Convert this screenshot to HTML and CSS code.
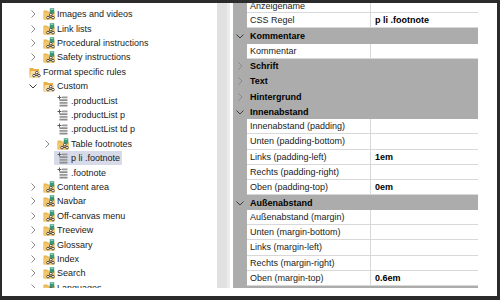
FILE: index.html
```html
<!DOCTYPE html>
<html>
<head>
<meta charset="utf-8">
<link rel="stylesheet" href="styles.css">
</head>
<body>
<svg class="defs" width="0" height="0">
  <defs>
    <symbol id="fld" viewBox="0 0 12 12">
      <path d="M0.5 2.5h3.5l1 1h6.5v8h-11z" fill="#eab655"/>
      <path d="M0.5 4.5h11v7h-11z" fill="#f2c66c"/>
      <rect x="6.8" y="0.3" width="4.4" height="5.4" fill="#3a9878"/>
      <rect x="7.6" y="1" width="2.8" height="1" fill="#8fd1b8"/>
      <g stroke="#2e2e2e" stroke-width="0.8" fill="#ffffff">
        <path d="M5 9.5L7.8 6.6L10 9.5z" fill="none"/>
        <circle cx="7.8" cy="6.6" r="1.3"/>
        <circle cx="5" cy="9.6" r="1.3"/>
        <circle cx="10" cy="9.6" r="1.3"/>
      </g>
    </symbol>
    <symbol id="fldopen" viewBox="0 0 12 12">
      <path d="M0.5 2h3.5l1 1h5v8.5h-9.5z" fill="#e9ae45"/>
      <path d="M2 5h9.5l-1.5 6.5h-9.5z" fill="#f8dda6"/>
      <g stroke="#2e2e2e" stroke-width="0.8" fill="#ffffff">
        <path d="M5 9.5L7.8 6.6L10 9.5z" fill="none"/>
        <circle cx="7.8" cy="6.6" r="1.3"/>
        <circle cx="5" cy="9.6" r="1.3"/>
        <circle cx="10" cy="9.6" r="1.3"/>
      </g>
    </symbol>
    <symbol id="leaf" viewBox="0 0 12 12">
      <path d="M0.5 2.5h4M2.5 0.5v4" stroke="#5a5a5a" stroke-width="1" fill="none"/>
      <rect x="5" y="1.5" width="5.5" height="1.8" fill="#9a9a9a"/>
      <rect x="2.5" y="4.3" width="8" height="1.8" fill="#8c8c8c"/>
      <rect x="2.5" y="7" width="8" height="1.8" fill="#9a9a9a"/>
      <rect x="2.5" y="9.7" width="8" height="1.8" fill="#8c8c8c"/>
    </symbol>
    <symbol id="chr" viewBox="0 0 12 12">
      <path d="M4.5 2.5L8 6L4.5 9.5" fill="none" stroke="#8a8a8a" stroke-width="1"/>
    </symbol>
    <symbol id="chd" viewBox="0 0 12 12">
      <path d="M2.5 4.5L6 8L9.5 4.5" fill="none" stroke="#3c3c3c" stroke-width="1"/>
    </symbol>
  </defs>
</svg>

<div class="frame">
  <div class="main">
    <div class="tree">
      <div class="node l1"><svg class="tw"><use href="#chr"/></svg><span class="item"><svg class="ico"><use href="#fld"/></svg><span class="txt">Images and videos</span></span></div>
      <div class="node l1"><svg class="tw"><use href="#chr"/></svg><span class="item"><svg class="ico"><use href="#fld"/></svg><span class="txt">Link lists</span></span></div>
      <div class="node l1"><svg class="tw"><use href="#chr"/></svg><span class="item"><svg class="ico"><use href="#fld"/></svg><span class="txt">Procedural instructions</span></span></div>
      <div class="node l1"><svg class="tw"><use href="#chr"/></svg><span class="item"><svg class="ico"><use href="#fld"/></svg><span class="txt">Safety instructions</span></span></div>
      <div class="node l0"><span class="tw"></span><span class="item"><svg class="ico"><use href="#fldopen"/></svg><span class="txt">Format specific rules</span></span></div>
      <div class="node l1"><svg class="tw"><use href="#chd"/></svg><span class="item"><svg class="ico"><use href="#fldopen"/></svg><span class="txt">Custom</span></span></div>
      <div class="node l2"><span class="tw"></span><span class="item"><svg class="ico"><use href="#leaf"/></svg><span class="txt">.productList</span></span></div>
      <div class="node l2"><span class="tw"></span><span class="item"><svg class="ico"><use href="#leaf"/></svg><span class="txt">.productList p</span></span></div>
      <div class="node l2"><span class="tw"></span><span class="item"><svg class="ico"><use href="#leaf"/></svg><span class="txt">.productList td p</span></span></div>
      <div class="node l2"><svg class="tw"><use href="#chr"/></svg><span class="item"><svg class="ico"><use href="#fld"/></svg><span class="txt">Table footnotes</span></span></div>
      <div class="node l2"><span class="tw"></span><span class="item sel"><svg class="ico"><use href="#leaf"/></svg><span class="txt">p li .footnote</span></span></div>
      <div class="node l2"><span class="tw"></span><span class="item"><svg class="ico"><use href="#leaf"/></svg><span class="txt">.footnote</span></span></div>
      <div class="node l1"><svg class="tw"><use href="#chr"/></svg><span class="item"><svg class="ico"><use href="#fld"/></svg><span class="txt">Content area</span></span></div>
      <div class="node l1"><svg class="tw"><use href="#chr"/></svg><span class="item"><svg class="ico"><use href="#fld"/></svg><span class="txt">Navbar</span></span></div>
      <div class="node l1"><svg class="tw"><use href="#chr"/></svg><span class="item"><svg class="ico"><use href="#fld"/></svg><span class="txt">Off-canvas menu</span></span></div>
      <div class="node l1"><svg class="tw"><use href="#chr"/></svg><span class="item"><svg class="ico"><use href="#fld"/></svg><span class="txt">Treeview</span></span></div>
      <div class="node l1"><svg class="tw"><use href="#chr"/></svg><span class="item"><svg class="ico"><use href="#fld"/></svg><span class="txt">Glossary</span></span></div>
      <div class="node l1"><svg class="tw"><use href="#chr"/></svg><span class="item"><svg class="ico"><use href="#fld"/></svg><span class="txt">Index</span></span></div>
      <div class="node l1"><svg class="tw"><use href="#chr"/></svg><span class="item"><svg class="ico"><use href="#fld"/></svg><span class="txt">Search</span></span></div>
      <div class="node l1"><svg class="tw"><use href="#chr"/></svg><span class="item"><svg class="ico"><use href="#fld"/></svg><span class="txt">Languages</span></span></div>
    </div>

    <div class="splitter"></div>

    <div class="grid">
      <div class="prop first"><span class="ind"></span><span class="lab">Anzeigename</span><span class="val"></span></div>
      <div class="prop"><span class="ind"></span><span class="lab">CSS Regel</span><span class="val">p li .footnote</span></div>
      <div class="cat"><svg class="ctw"><use href="#chd"/></svg><span class="ctxt">Kommentare</span></div>
      <div class="prop"><span class="ind"></span><span class="lab">Kommentar</span><span class="val"></span></div>
      <div class="cat"><svg class="ctw"><use href="#chr"/></svg><span class="ctxt">Schrift</span></div>
      <div class="cat"><svg class="ctw"><use href="#chr"/></svg><span class="ctxt">Text</span></div>
      <div class="cat"><svg class="ctw"><use href="#chr"/></svg><span class="ctxt">Hintergrund</span></div>
      <div class="cat"><svg class="ctw"><use href="#chd"/></svg><span class="ctxt">Innenabstand</span></div>
      <div class="prop"><span class="ind"></span><span class="lab">Innenabstand (padding)</span><span class="val"></span></div>
      <div class="prop"><span class="ind"></span><span class="lab">Unten (padding-bottom)</span><span class="val"></span></div>
      <div class="prop"><span class="ind"></span><span class="lab">Links (padding-left)</span><span class="val">1em</span></div>
      <div class="prop"><span class="ind"></span><span class="lab">Rechts (padding-right)</span><span class="val"></span></div>
      <div class="prop"><span class="ind"></span><span class="lab">Oben (padding-top)</span><span class="val">0em</span></div>
      <div class="cat"><svg class="ctw"><use href="#chd"/></svg><span class="ctxt">Außenabstand</span></div>
      <div class="prop"><span class="ind"></span><span class="lab">Außenabstand (margin)</span><span class="val"></span></div>
      <div class="prop"><span class="ind"></span><span class="lab">Unten (margin-bottom)</span><span class="val"></span></div>
      <div class="prop"><span class="ind"></span><span class="lab">Links (margin-left)</span><span class="val"></span></div>
      <div class="prop"><span class="ind"></span><span class="lab">Rechts (margin-right)</span><span class="val"></span></div>
      <div class="prop"><span class="ind"></span><span class="lab">Oben (margin-top)</span><span class="val">0.6em</span></div>
    </div>
  </div>
</div>
</body>
</html>
```

FILE: styles.css
```css
html, body {
  margin: 0;
  padding: 0;
}

body {
  width: 500px;
  height: 300px;
  overflow: hidden;
  background: #2b2b2b;
  font-family: "Liberation Sans", Arial, sans-serif;
  font-size: 9px;
  color: #111;
}

.defs {
  display: block;
  width: 0;
  height: 0;
  overflow: hidden;
}

.frame {
  margin: 3px 3px 0 2px;
  width: 495px;
  height: 293px;
  background: #ffffff;
}

.main {
  display: flex;
  height: 285px;
  overflow: hidden;
}

/* ---------- tree ---------- */
.tree {
  width: 215px;
  flex: none;
  padding-top: 4.1px;
  overflow: hidden;
}

.node {
  display: flex;
  align-items: center;
  height: 14.4px;
  white-space: nowrap;
}

.l0 { padding-left: 11px; }
.l1 { padding-left: 25px; }
.l2 { padding-left: 39px; }

.tw {
  display: block;
  flex: none;
  width: 12px;
  height: 12px;
}

.item {
  display: flex;
  align-items: center;
  height: 100%;
  margin-left: 1px;
  padding: 0 2px 0 3px;
}

.item.sel {
  background: #d7dae8;
}

.ico {
  display: block;
  flex: none;
  width: 12px;
  height: 12px;
  margin-right: 2px;
}

.txt {
  color: #1a1a1a;
}

/* ---------- splitter ---------- */
.splitter {
  width: 16px;
  flex: none;
  background: linear-gradient(to right, #e1e1e1 0, #e1e1e1 10px, #ececec 10px, #ececec 13px, #ffffff 13px, #ffffff 16px);
}

/* ---------- property grid ---------- */
.grid {
  width: 245px;
  flex: none;
  display: flex;
  flex-direction: column;
  overflow: hidden;
  background: #acacac;
}

.prop {
  display: grid;
  grid-template-columns: 14px 124px 107px;
  height: 15.15px;
  flex: none;
}

.prop.first {
  margin-top: -4.85px;
}

.prop.first .lab {
  align-items: flex-end;
  padding-bottom: 1px;
}

.ind {
  background: #acacac;
}

.lab, .val {
  display: flex;
  align-items: center;
  background: #ffffff;
  border-bottom: 1px solid #d8d8d8;
  box-sizing: border-box;
  white-space: nowrap;
  overflow: hidden;
}

.lab {
  padding-left: 3px;
  border-right: 1px solid #d8d8d8;
  color: #1a1a1a;
}

.val {
  padding-left: 4px;
  font-weight: bold;
  color: #000;
}

.cat {
  display: flex;
  align-items: center;
  height: 15.15px;
  flex: none;
  background: #acacac;
}

.ctw {
  display: block;
  flex: none;
  width: 12px;
  height: 12px;
  margin-left: 1px;
  margin-right: 4px;
}

.ctxt {
  font-weight: bold;
  color: #000;
}
```
